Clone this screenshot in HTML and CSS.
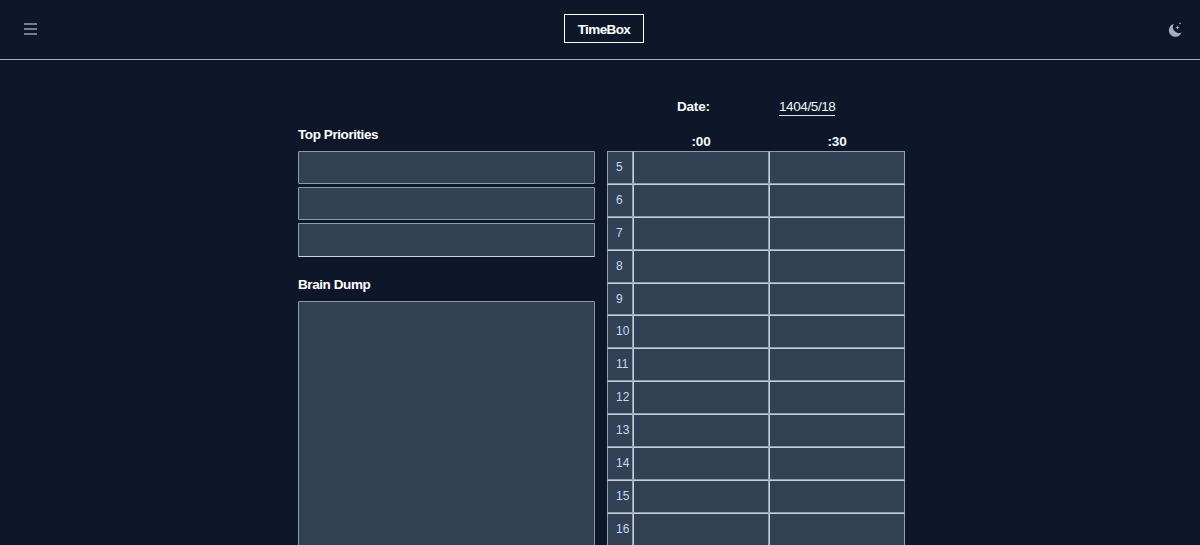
FILE: index.html
```html
<!DOCTYPE html>
<html lang="en">
<head>
<meta charset="utf-8">
<title>TimeBox</title>
<link rel="stylesheet" href="styles.css">
</head>
<body>
<header class="topbar">
  <button class="icon-btn" aria-label="Menu">
    <svg width="13" height="12" viewBox="0 0 13 12"><path d="M0 1h13M0 6h13M0 11h13" fill="none" stroke="#94a3b8" stroke-width="1.300"/></svg>
  </button>
  <div class="logo">TimeBox</div>
  <button class="icon-btn" aria-label="Theme">
    <svg width="14" height="15" viewBox="0 0 14 15"><path d="M5.800 2A6.500 6.500 0 1 0 13.500 10.500 6 6 0 0 1 5.800 2Z" fill="#a3afc0"/><path d="M9.500 3.500l.6 1.500 1.500.6-1.500.6-.6 1.500-.6-1.500-1.500-.6 1.500-.6ZM12 0l.4 1 1 .4-1 .4-.4 1-.4-1-1-.4 1-.4Z" fill="#a3afc0"/></svg>
  </button>
</header>
<main class="sheet">
  <section class="left">
    <h2 class="title first">Top Priorities</h2>
    <div class="box"></div>
    <div class="box"></div>
    <div class="box last"></div>
    <h2 class="title second">Brain Dump</h2>
    <div class="dump"></div>
  </section>
  <section class="right">
    <div class="date-row">
      <span class="date-label">Date:</span>
      <span class="date-value">1404/5/18</span>
    </div>
    <div class="heads"><span>:00</span><span>:30</span></div>
    <div class="grid">
      <div class="hour">5</div><div class="cell"></div><div class="cell"></div>
      <div class="hour">6</div><div class="cell"></div><div class="cell"></div>
      <div class="hour">7</div><div class="cell"></div><div class="cell"></div>
      <div class="hour">8</div><div class="cell"></div><div class="cell"></div>
      <div class="hour">9</div><div class="cell"></div><div class="cell"></div>
      <div class="hour">10</div><div class="cell"></div><div class="cell"></div>
      <div class="hour">11</div><div class="cell"></div><div class="cell"></div>
      <div class="hour">12</div><div class="cell"></div><div class="cell"></div>
      <div class="hour">13</div><div class="cell"></div><div class="cell"></div>
      <div class="hour">14</div><div class="cell"></div><div class="cell"></div>
      <div class="hour">15</div><div class="cell"></div><div class="cell"></div>
      <div class="hour">16</div><div class="cell"></div><div class="cell"></div>
    </div>
  </section>
</main>
</body>
</html>
```
FILE: styles.css
```css
* { box-sizing: border-box; }
html, body { margin: 0; height: 545px; overflow: hidden; }
body {
  background: #0e172a;
  color: #f8fafc;
  font-family: "Liberation Sans", Arial, sans-serif;
  font-size: 13.500px;
}
.topbar {
  height: 60px;
  border-bottom: 1px solid #a3afc0;
  display: flex;
  align-items: center;
  justify-content: space-between;
  padding: 0 18px 1px 24px;
}
.icon-btn {
  background: none;
  border: 0;
  padding: 0;
  display: flex;
}
.logo {
  width: 80px;
  height: 29px;
  margin: -2px 0 0 3px;
  border: 1px solid #fff;
  display: flex;
  align-items: center;
  justify-content: center;
  padding-top: 2px;
  font-size: 13.500px;
  letter-spacing: -0.6px;
  font-weight: 700;
  color: #fff;
}
.sheet {
  width: 607px;
  margin: 0 0 0 298px;
  display: grid;
  grid-template-columns: 297px 298px;
  column-gap: 12px;
}
.left { padding-top: 67px; }
.title {
  margin: 0;
  font-size: 13.500px;
  letter-spacing: -0.42px;
  line-height: 16px;
  font-weight: 700;
  color: #fff;
}
.box {
  height: 33px;
  margin-top: 3px;
  background: #334155;
  border: 1px solid #8c9aae;
  border-radius: 1px;
}
.title.first { margin-bottom: 8px; }
.box.last { height: 34px; border-bottom-color: #cbd5e1; }
.title.second { margin-top: 20px; margin-bottom: 8px; }
.dump {
  height: 300px;
  background: #334155;
  border: 1px solid #8c9aae;
  border-radius: 1px;
}
.date-row {
  height: 56px;
  padding-top: 38px;
  display: grid;
  grid-template-columns: 172px 56px;
  align-items: start;
}
.date-label {
  font-weight: 700;
  line-height: 18px;
  padding-left: 70px;
  letter-spacing: -0.2px;
}
.date-value {
  letter-spacing: -0.4px;
  line-height: 17px;
  height: 18px;
  border-bottom: 1px solid #e2e8f0;
  text-align: center;
  white-space: nowrap;
  color: #f1f5f9;
}
.heads {
  margin-top: 18px;
  height: 17px;
  display: grid;
  grid-template-columns: 26px 136px 136px;
  font-weight: 700;
  line-height: 16px;
  letter-spacing: -0.2px;
  text-align: center;
}
.heads span:first-child { grid-column: 2; }
.grid {
  display: grid;
  grid-template-columns: 26px 136px 136px;
  grid-auto-rows: 32.900px;
}
.hour, .cell {
  background: #334155;
  border: 1px solid #8f9db1;
  border-top-color: #c6cfdb;
  border-left-color: #c6cfdb;
}
.hour {
  color: #bfdbfe;
  font-size: 12px;
  display: flex;
  align-items: center;
  padding-left: 8px;
  padding-bottom: 1px;
  border-left-color: #8f9db1;
}
.hour:nth-child(1), .cell:nth-child(2), .cell:nth-child(3) { border-top-color: #8f9db1; }
```
